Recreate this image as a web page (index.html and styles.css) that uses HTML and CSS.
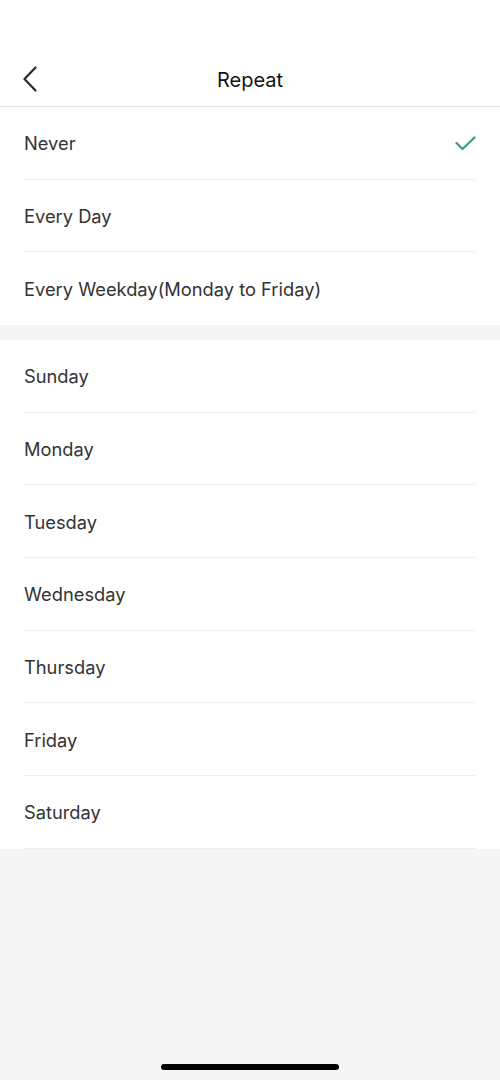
FILE: index.html
```html
<!DOCTYPE html>
<html>
<head>
<meta charset="utf-8">
<link rel="stylesheet" href="styles.css">
</head>
<body>
<div class="screen">
  <header class="nav">
    <button class="back" aria-label="Back">
      <svg width="16" height="26" viewBox="0 0 16 26"><path d="M13.5 1.5 L2.5 13 L13.5 24.5" fill="none" stroke="#2b2b2b" stroke-width="2.2" stroke-linecap="round" stroke-linejoin="round"/></svg>
    </button>
    <h1 class="title">Repeat</h1>
  </header>
  <ul class="group">
    <li class="row"><span>Never</span>
      <svg class="check" width="21" height="15" viewBox="0 0 21 15"><path d="M1.5 7 L7.5 13 L19.5 1.5" fill="none" stroke="#3a9e74" stroke-width="2.2" stroke-linecap="round" stroke-linejoin="round"/></svg>
    </li>
    <li class="row"><span>Every Day</span></li>
    <li class="row last"><span>Every Weekday(Monday to Friday)</span></li>
  </ul>
  <ul class="group">
    <li class="row"><span>Sunday</span></li>
    <li class="row"><span>Monday</span></li>
    <li class="row"><span>Tuesday</span></li>
    <li class="row"><span>Wednesday</span></li>
    <li class="row"><span>Thursday</span></li>
    <li class="row"><span>Friday</span></li>
    <li class="row"><span>Saturday</span></li>
  </ul>
  <div class="home-indicator"></div>
</div>
</body>
</html>
```

FILE: styles.css
```css
* { box-sizing: border-box; }
html, body { margin: 0; padding: 0; }
body {
  background: #f5f5f5;
  font-family: Inter, "Liberation Sans", Arial, sans-serif;
  color: #333;
}
.screen {
  width: 500px;
  height: 1080px;
  position: relative;
  background: #f5f5f5;
}
.nav {
  height: 107px;
  background: #fff;
  border-bottom: 1px solid #e2e2e2;
  display: flex;
  align-items: flex-end;
  justify-content: center;
  position: relative;
  padding-bottom: 14px;
}
.back {
  position: absolute;
  left: 22px;
  top: 66px;
  border: 0;
  background: none;
  padding: 0;
  display: flex;
}
.title {
  margin: 0;
  font-size: 20px;
  font-weight: 400;
  color: #111;
  line-height: 24px;
}
.group {
  list-style: none;
  margin: 0;
  padding: 0;
  background: #fff;
}
.group + .group { margin-top: 15px; }
.row {
  height: 72.67px;
  margin: 0 24px;
  border-bottom: 1px solid #efefef;
  display: flex;
  align-items: center;
  justify-content: space-between;
  font-size: 18.3px;
  color: #333;
  padding-top: 1px;
}
.row.last { border-bottom: 0; }
.home-indicator {
  position: absolute;
  left: 161px;
  bottom: 10px;
  width: 178px;
  height: 6px;
  border-radius: 3px;
  background: #000;
}
```
